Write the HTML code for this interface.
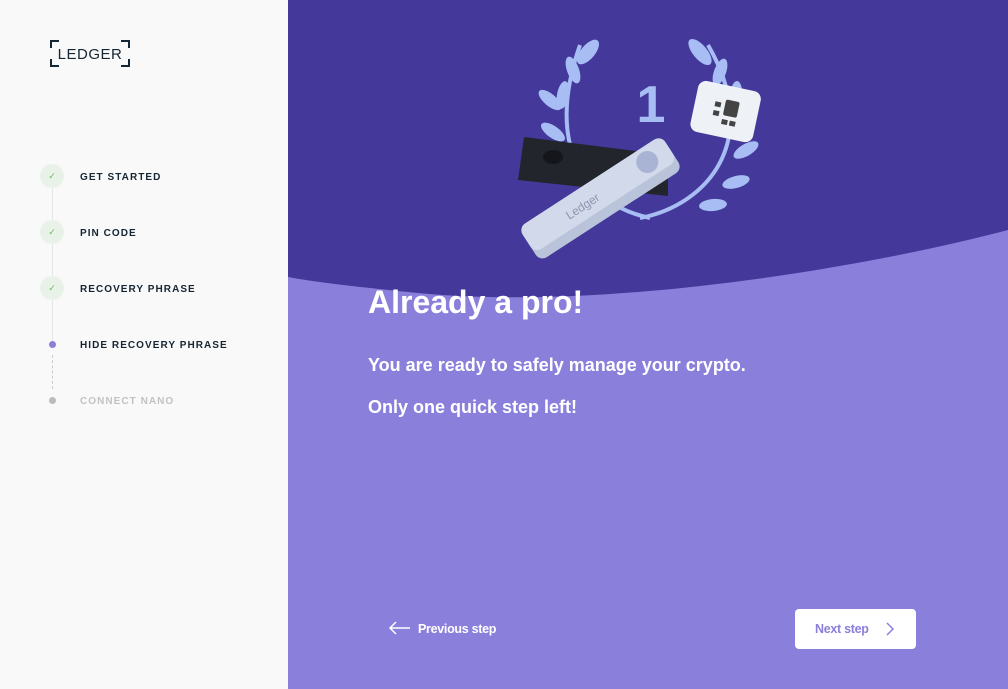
<!DOCTYPE html>
<html><head><meta charset="utf-8"><style>
*{margin:0;padding:0;box-sizing:border-box}
body{width:1008px;height:689px;overflow:hidden;font-family:"Liberation Sans",sans-serif;position:relative;background:#f9f9f9}
.side{position:absolute;left:0;top:0;width:288px;height:689px;background:#f9f9f9}
.main{position:absolute;left:288px;top:0;width:720px;height:689px;background:#8a80db;overflow:hidden}
.step{position:absolute;left:80px;font-size:10px;font-weight:bold;letter-spacing:1.05px;color:#142533}
.circ{position:absolute;left:40px;width:24px;height:24px;border-radius:50%;background:#e9f2e9;color:#66be54;font-size:9px;text-align:center;line-height:24px}
.vl{position:absolute;left:52px;width:1px;background:#e6e6e6}
</style></head><body>
<div class="side">
<svg style="position:absolute;left:50px;top:40px" width="80" height="27" viewBox="0 0 80 27">
<path d="M1 8V1H9M71 1H79V8M1 19V26H9M71 26H79V19" fill="none" stroke="#142533" stroke-width="2"/>
<text x="40" y="19" text-anchor="middle" font-family="Liberation Sans" font-size="15" fill="#142533" letter-spacing="0.5">LEDGER</text>
</svg>
<div class="vl" style="top:188px;height:156px"></div>
<div style="position:absolute;left:52px;top:355px;height:34px;border-left:1px dashed #ccc"></div>
<div class="circ" style="top:164px">✓</div><div class="step" style="top:172px">GET STARTED</div>
<div class="circ" style="top:220px">✓</div><div class="step" style="top:228px">PIN CODE</div>
<div class="circ" style="top:276px">✓</div><div class="step" style="top:284px">RECOVERY PHRASE</div>
<div style="position:absolute;left:49px;top:341px;width:7px;height:7px;border-radius:50%;background:#8a80db"></div>
<div class="step" style="top:340px">HIDE RECOVERY PHRASE</div>
<div style="position:absolute;left:49px;top:397px;width:7px;height:7px;border-radius:50%;background:#bbb"></div>
<div class="step" style="top:396px;color:#c2c2c2">CONNECT NANO</div>
</div>
<div class="main">
<svg width="720" height="689" style="position:absolute;left:0;top:0">
<path d="M0 0H720V230C560 272 300 312 120 292C60 286 20 281 0 277Z" fill="#44399a"/>
<g fill="none" stroke="#a7bdf3" stroke-width="4">
<path d="M362 218C300 205 255 150 292 45"/>
<path d="M352 218C420 205 475 140 420 45"/>
</g>
<g fill="#a7bdf3">
<ellipse cx="300" cy="52" rx="7" ry="15" transform="rotate(40 300 52)"/>
<ellipse cx="285" cy="70" rx="6" ry="14" transform="rotate(-20 285 70)"/>
<ellipse cx="275" cy="95" rx="6" ry="14" transform="rotate(10 275 95)"/>
<ellipse cx="262" cy="100" rx="6" ry="14" transform="rotate(-50 262 100)"/>
<ellipse cx="265" cy="132" rx="6" ry="14" transform="rotate(-55 265 132)"/>
<ellipse cx="270" cy="168" rx="6" ry="14" transform="rotate(-75 270 168)"/>
<ellipse cx="300" cy="196" rx="6" ry="14" transform="rotate(-80 300 196)"/>
<ellipse cx="412" cy="52" rx="7" ry="16" transform="rotate(-40 412 52)"/>
<ellipse cx="432" cy="72" rx="6" ry="14" transform="rotate(20 432 72)"/>
<ellipse cx="448" cy="95" rx="6" ry="14" transform="rotate(5 448 95)"/>
<ellipse cx="458" cy="150" rx="6" ry="14" transform="rotate(60 458 150)"/>
<ellipse cx="448" cy="182" rx="6" ry="14" transform="rotate(75 448 182)"/>
<ellipse cx="425" cy="205" rx="6" ry="14" transform="rotate(85 425 205)"/>
</g>
<text x="363" y="122" text-anchor="middle" font-family="Liberation Sans" font-weight="bold" font-size="52" fill="#a7bdf3">1</text>
<g transform="rotate(12 440 110)"><rect x="406" y="86" width="64" height="52" rx="8" fill="#eef1f6"/>
<rect x="436" y="100" width="14" height="16" rx="2" fill="#444"/><rect x="426" y="104" width="6" height="5" fill="#444"/><rect x="426" y="113" width="6" height="5" fill="#444"/><rect x="436" y="120" width="6" height="5" fill="#444"/><rect x="444" y="120" width="6" height="5" fill="#444"/></g>
<path d="M236 137L380 155L380 196L230 180Z" fill="#23252d"/>
<ellipse cx="265" cy="157" rx="10" ry="7" fill="#15161b"/>
<g transform="rotate(-33 310 200)">
<rect x="228" y="180" width="170" height="40" rx="8" fill="#b9c3da"/>
<rect x="228" y="180" width="170" height="30" rx="8" fill="#d2d9ea"/>
<circle cx="372" cy="195" r="11" fill="#a9b3d3"/>
<text x="275" y="201" font-family="Liberation Sans" font-size="12" fill="#8d96b0">Ledger</text>
</g>
</svg>
<div style="position:absolute;left:80px;top:284px;color:#fff;font-weight:bold;font-size:32px">Already a pro!</div>
<div style="position:absolute;left:80px;top:355px;color:#fff;font-weight:bold;font-size:18px">You are ready to safely manage your crypto.</div>
<div style="position:absolute;left:80px;top:397px;color:#fff;font-weight:bold;font-size:18px">Only one quick step left!</div>
<div style="position:absolute;left:100px;top:621px;color:#fff;font-weight:bold;font-size:12.5px">
<svg width="22" height="14" style="position:absolute;left:0;top:0" viewBox="0 0 22 14"><path d="M8 1L2 7L8 13M2 7H22" fill="none" stroke="#fff" stroke-width="1.5"/></svg>
<span style="position:absolute;left:30px;top:1px;white-space:nowrap;letter-spacing:-0.3px">Previous step</span></div>
<div style="position:absolute;left:507px;top:609px;width:121px;height:40px;background:#fff;border-radius:4px;color:#8a80db;font-weight:bold;font-size:12.5px">
<span style="position:absolute;left:20px;top:13px;letter-spacing:-0.3px">Next step</span>
<svg width="10" height="14" style="position:absolute;left:90px;top:13px"><path d="M2 1L8 7L2 13" fill="none" stroke="#8a80db" stroke-width="1.5"/></svg></div>
</div>
</body></html>
